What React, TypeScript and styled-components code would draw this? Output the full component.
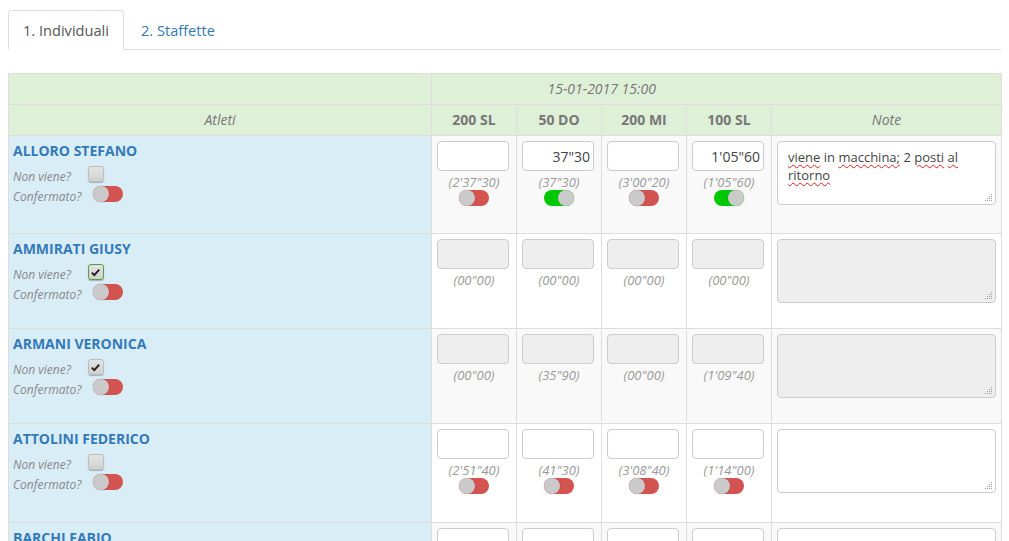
import React from "react";
import styled, { createGlobalStyle, css } from "styled-components";

const GlobalStyle = createGlobalStyle`
  html, body {
    margin: 0;
    padding: 0;
    overflow: hidden;
    background: #fff;
  }
  body {
    font-family: "Open Sans", "Liberation Sans", sans-serif;
    font-size: 14px;
    line-height: 20px;
    color: #333;
  }
  * {
    box-sizing: border-box;
  }
`;

interface TimeEntry {
  value: string;
  hint: string;
  on: boolean;
}

interface Athlete {
  name: string;
  absent: boolean;
  focused?: boolean;
  confirmed: boolean;
  height: number;
  times: TimeEntry[];
  note: string;
}

const events = ["200 SL", "50 DO", "200 MI", "100 SL"];

const t = (hint: string, value = "", on = false): TimeEntry => ({ value, hint, on });

const athletes: Athlete[] = [
  {
    name: "ALLORO STEFANO",
    absent: false,
    confirmed: false,
    height: 98,
    times: [
      t("(2'37\"30)"),
      t("(37\"30)", "37\"30", true),
      t("(3'00\"20)"),
      t("(1'05\"60)", "1'05\"60", true),
    ],
    note: "viene in macchina; 2 posti al ritorno",
  },
  {
    name: "AMMIRATI GIUSY",
    absent: true,
    focused: true,
    confirmed: false,
    height: 95,
    times: [t("(00\"00)"), t("(00\"00)"), t("(00\"00)"), t("(00\"00)")],
    note: "",
  },
  {
    name: "ARMANI VERONICA",
    absent: true,
    confirmed: false,
    height: 95,
    times: [t("(00\"00)"), t("(35\"90)"), t("(00\"00)"), t("(1'09\"40)")],
    note: "",
  },
  {
    name: "ATTOLINI FEDERICO",
    absent: false,
    confirmed: false,
    height: 99,
    times: [t("(2'51\"40)"), t("(41\"30)"), t("(3'08\"40)"), t("(1'14\"00)")],
    note: "",
  },
  {
    name: "BARCHI FABIO",
    absent: false,
    confirmed: false,
    height: 99,
    times: [t("(2'45\"10)"), t("(39\"80)"), t("(3'02\"50)"), t("(1'10\"20)")],
    note: "",
  },
];

// words the browser marked as misspelled in the note
const flagged = ["viene", "macchina;", "posti", "al", "ritorno"];

const Grip = () => {
  const dots: React.ReactNode[] = [];
  for (let i = 0; i < 4; i++) {
    for (let j = 0; j < 4; j++) {
      if (i + j >= 3) {
        dots.push(<rect key={`${i}-${j}`} x={i * 2} y={j * 2} width="1" height="1" fill="#9a9a9a" />);
      }
    }
  }
  return (
    <GripIcon width="8" height="8" viewBox="0 0 8 8">
      {dots}
    </GripIcon>
  );
};

const CheckMark = () => (
  <svg width="11" height="11" viewBox="0 0 11 11">
    <path d="M1.8 5.6 L4.3 8.1 L9.2 2.6" fill="none" stroke="#1e1e1e" strokeWidth="1.9" />
  </svg>
);

const App: React.FC = () => {
  return (
    <Page>
      <GlobalStyle />
      <Tabs>
        <Tab $active>1. Individuali</Tab>
        <Tab>2. Staffette</Tab>
      </Tabs>
      <Sheet>
        <colgroup>
          <col style={{ width: 423 }} />
          {events.map((e) => (
            <col key={e} style={{ width: 85 }} />
          ))}
          <col style={{ width: 230 }} />
        </colgroup>
        <thead>
          <tr>
            <HeadCell />
            <HeadCell colSpan={4} $italic $openRight>
              15-01-2017 15:00
            </HeadCell>
            <HeadCell $openLeft />
          </tr>
          <tr>
            <HeadCell $italic>Atleti</HeadCell>
            {events.map((e) => (
              <HeadCell key={e}>{e}</HeadCell>
            ))}
            <HeadCell $italic>Note</HeadCell>
          </tr>
        </thead>
        <tbody>
          {athletes.map((a, index) => (
            <DataRow key={a.name} $height={a.height}>
              <NameCell>
                <Name>{a.name}</Name>
                <FieldRow>
                  <FieldLabel>Non viene?</FieldLabel>
                  <Check $focused={a.focused}>{a.absent && <CheckMark />}</Check>
                </FieldRow>
                <FieldRow>
                  <FieldLabel>Confermato?</FieldLabel>
                  <Switch $on={a.confirmed} $gap={12}>
                    <Knob />
                  </Switch>
                </FieldRow>
              </NameCell>
              {a.times.map((time, i) => (
                <TimeCell key={i} $striped={index % 2 === 0}>
                  <TimeInput disabled={a.absent} defaultValue={time.value} />
                  <Hint>{time.hint}</Hint>
                  {!a.absent && (
                    <Switch $on={time.on} $gap={0}>
                      <Knob />
                    </Switch>
                  )}
                </TimeCell>
              ))}
              <NoteCell $striped={index % 2 === 0}>
                <NoteBox $disabled={a.absent}>
                  {a.note.split(" ").map((word, i) => (
                    <React.Fragment key={i}>
                      {i > 0 && " "}
                      {flagged.includes(word) ? <Misspelled>{word}</Misspelled> : word}
                    </React.Fragment>
                  ))}
                  <Grip />
                </NoteBox>
              </NoteCell>
            </DataRow>
          ))}
        </tbody>
      </Sheet>
    </Page>
  );
};

export default App;

const Page = styled.div`
  padding: 10px 8px 0;
`;

const Tabs = styled.ul`
  display: flex;
  list-style: none;
  margin: 0;
  padding: 0;
  border-bottom: 1px solid #ddd;
`;

const Tab = styled.li<{ $active?: boolean }>`
  margin: 0 2px -1px 0;
  padding: 9px 14px;
  font-size: 14.6px;
  line-height: 20px;
  border: 1px solid transparent;
  border-radius: 4px 4px 0 0;
  color: #337ab7;
  ${(p) =>
    p.$active &&
    css`
      color: #555;
      background: #fff;
      border-color: #ddd #ddd transparent;
    `}
`;

const Sheet = styled.table`
  width: 100%;
  margin-top: 23px;
  table-layout: fixed;
  border-collapse: collapse;
  border: 1px solid #ddd;
`;

const HeadCell = styled.th<{ $italic?: boolean; $openRight?: boolean; $openLeft?: boolean }>`
  height: 31px;
  padding: 5px;
  border: 1px solid #ddd;
  background: #dff0d8;
  color: #777;
  text-align: center;
  font-weight: ${(p) => (p.$italic ? 400 : 700)};
  font-style: ${(p) => (p.$italic ? "italic" : "normal")};
  ${(p) => p.$openRight && "border-right-style: hidden;"}
  ${(p) => p.$openLeft && "border-left-style: hidden;"}
`;

const DataRow = styled.tr<{ $height: number }>`
  height: ${(p) => p.$height}px;
`;

const NameCell = styled.td`
  padding: 5px 5px 5px 4px;
  border: 1px solid #ddd;
  background: #d9edf7;
  vertical-align: top;
`;

const Name = styled.div`
  font-weight: 700;
  color: #337ab7;
  line-height: 20px;
  margin-bottom: 6px;
`;

const FieldRow = styled.div`
  display: flex;
  align-items: flex-start;
  height: 20px;
`;

const FieldLabel = styled.span`
  font-size: 12px;
  font-style: italic;
  line-height: 20px;
  color: #888;
`;

const Check = styled.span<{ $focused?: boolean }>`
  display: inline-flex;
  align-items: center;
  justify-content: center;
  width: 16px;
  height: 16px;
  margin: -1px 0 0 17px;
  border-radius: 3px;
  border: ${(p) => (p.$focused ? "1.5px solid #5f9a3c" : "1px solid #bcbcbc")};
  background: linear-gradient(#e4e4e4, #d0d0d0);
  box-shadow: 0 1px 1px rgba(0, 0, 0, 0.25);
`;

const Switch = styled.span<{ $on: boolean; $gap: number }>`
  display: inline-flex;
  justify-content: ${(p) => (p.$on ? "flex-end" : "flex-start")};
  width: 30px;
  height: 16px;
  margin: -1px 0 0 ${(p) => p.$gap}px;
  border-radius: 8px;
  background: ${(p) => (p.$on ? "#00c800" : "#d25350")};
`;

const Knob = styled.span`
  width: 16px;
  height: 16px;
  border-radius: 50%;
  background: #cacaca;
  box-shadow: 0 0 0 1px rgba(0, 0, 0, 0.06);
`;

const TimeCell = styled.td<{ $striped: boolean }>`
  padding: 5px;
  border: 1px solid #ddd;
  background: ${(p) => (p.$striped ? "#f9f9f9" : "#fff")};
  vertical-align: top;
  text-align: center;
`;

const TimeInput = styled.input`
  display: block;
  width: 72px;
  height: 30px;
  margin: 0 0 2px;
  padding: 0 3px;
  border: 1px solid #ccc;
  border-radius: 4px;
  background: #fff;
  font-family: inherit;
  font-size: 14px;
  color: #444;
  text-align: right;
  &:disabled {
    background: #eee;
  }
`;

const Hint = styled.div`
  font-size: 13px;
  font-style: italic;
  line-height: 18px;
  color: #999;
`;

const NoteCell = styled.td<{ $striped: boolean }>`
  padding: 5px;
  border: 1px solid #ddd;
  background: ${(p) => (p.$striped ? "#f9f9f9" : "#fff")};
  vertical-align: top;
`;

const NoteBox = styled.div<{ $disabled: boolean }>`
  position: relative;
  height: 64px;
  padding: 6px 10px;
  border: 1px solid #ccc;
  border-radius: 4px;
  background: ${(p) => (p.$disabled ? "#eee" : "#fff")};
  font-size: 13px;
  line-height: 18px;
  color: #444;
`;

const Misspelled = styled.span`
  text-decoration: underline wavy #e02020;
  text-decoration-thickness: 1px;
  text-underline-offset: 2px;
`;

const GripIcon = styled.svg`
  position: absolute;
  right: 2px;
  bottom: 2px;
`;
